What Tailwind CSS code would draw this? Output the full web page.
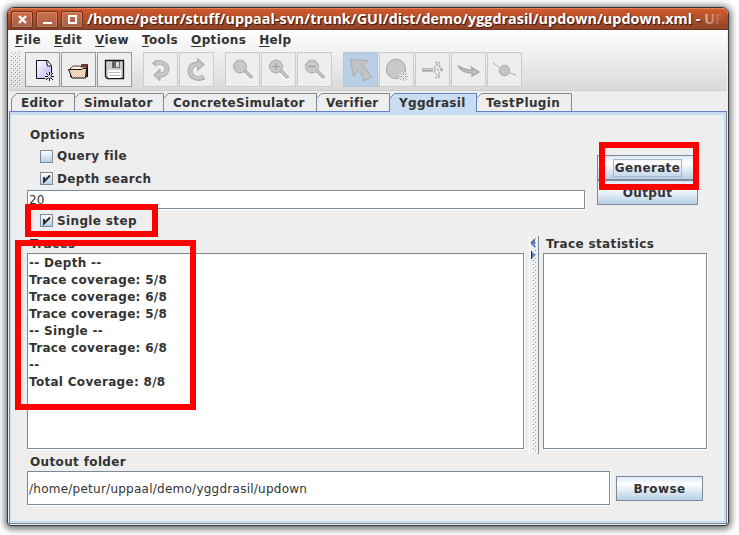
<!DOCTYPE html>
<html lang="en"><head><meta charset="utf-8"><title>UPPAAL</title>
<script src="https://cdn.jsdelivr.net/npm/@tailwindcss/browser@4"></script></head>
<body class="w-[739px] h-[535px] overflow-hidden bg-white pl-[7px] pt-[7px] font-['DejaVu_Sans',sans-serif] text-[12px] leading-[17px] font-bold text-[#333] tracking-[.36px]">
<svg width="0" height="0" class="absolute"><defs>
<pattern id="dots" width="4" height="4" patternUnits="userSpaceOnUse"><path d="M0 0h1v1H0zM2 2h1v1H2z" fill="#8796a8"/><path d="M1 1h1v1H1zM3 3h1v1H3z" fill="#fff"/></pattern>
<pattern id="check" width="2" height="2" patternUnits="userSpaceOnUse"><path d="M0 0h2v2H0z" fill="#fff0dc"/><path d="M0 0h1v1H0zM1 1h1v1H1z" fill="#e8bd98"/></pattern>
<linearGradient id="page" x2="1" y2="1"><stop stop-color="#fff"/><stop offset="1" stop-color="#b4b2f5"/></linearGradient>
<symbol id="lens" viewBox="0 0 33 33"><path d="M18 19l8 8" stroke="#fff" stroke-width="3"/><path d="M18 17l8 8" stroke="#aaa" stroke-width="3.5"/><path d="M18 17l7.500 7.500" stroke="#ccc" stroke-width="1.500"/><circle cx="14" cy="13.500" r="6.500" fill="#c8c8c8" stroke="#aaa"/></symbol>
<symbol id="burst" viewBox="0 0 9 9"><path d="M4.500 0v3M4.500 6v3M0 4.500h3M6 4.500h3M1 1l2.500 2.500M5.500 5.500L8 8M8 1L5.500 3.500M3.500 5.500L1 8" stroke="currentColor"/></symbol>
</defs></svg>
<div class="w-[722px] h-[519px] flex flex-col rounded-t-[7px] rounded-b-[4px] border border-[#393536] bg-[#eee] shadow-[0_1px_7px_2px_rgba(0,0,0,0.6)]">
  <header class="h-[22px] shrink-0 rounded-t-[6px] border-t border-t-[#e08055] border-b border-b-[#70351f] bg-gradient-to-b from-[#d1592c] to-[#8f4429] flex items-center pl-[3px] gap-[3px] tracking-normal">
    <div class="w-[22px] h-[17px] shrink-0 rounded-[2px] border border-[#6e301b] bg-white/15 shadow-[inset_0_0_0_1px_rgba(255,255,255,.2)] grid place-items-center"><svg width="9" height="9"><path d="M1 1l7 7M8 1L1 8" stroke="#fff" stroke-width="2.400"/></svg></div>
    <div class="w-[22px] h-[17px] shrink-0 rounded-[2px] border border-[#6e301b] bg-white/15 shadow-[inset_0_0_0_1px_rgba(255,255,255,.2)] grid place-items-center"><svg width="9" height="9"><path d="M0 8h9" stroke="#fff" stroke-width="2"/></svg></div>
    <div class="w-[22px] h-[17px] shrink-0 rounded-[2px] border border-[#6e301b] bg-white/15 shadow-[inset_0_0_0_1px_rgba(255,255,255,.2)] grid place-items-center"><svg width="9" height="9"><path d="M1 1h7v7H1z" fill="none" stroke="#fff" stroke-width="2"/></svg></div>
    <div class="whitespace-nowrap font-['Open_Sans',sans-serif] text-[14.38px] leading-[20px] text-white [text-shadow:1px_1px_1px_#30150d] -mt-px ml-[1px]">/home/petur/stuff/uppaal-svn/trunk/GUI/dist/demo/yggdrasil/updown/updown.xml - <span class="bg-gradient-to-r from-white/60 to-white/0 bg-clip-text text-transparent [text-shadow:none]">UP</span></div>
  </header>
  <div class="h-[60px] shrink-0 bg-gradient-to-b from-white to-[#dadada] mx-px">
    <nav class="h-[20px] flex pl-[6px] pt-[2px] gap-[13px]">
      <span><u class="underline-offset-2">F</u>ile</span><span><u class="underline-offset-2">E</u>dit</span><span><u class="underline-offset-2">V</u>iew</span><span><u class="underline-offset-2">T</u>ools</span><span><u class="underline-offset-2">O</u>ptions</span><span><u class="underline-offset-2">H</u>elp</span>
    </nav>
    <div class="flex pl-[2px] pt-[2px]">
      <svg width="10" height="36" class="mr-[4px]"><rect width="10" height="36" fill="url(#dots)"/></svg>
      <div class="flex gap-px mr-[11px] *:border *:border-[#999] *:bg-[#eee] *:size-[35px]">
        <svg viewBox="0 0 33 33"><path d="M10.500 7.500h11l4 5v13h-15z" fill="url(#page)" stroke="#111"/><path d="M20.500 8l1 5h4" fill="#fff" stroke="#111"/><path d="M19 20h10v9H19z" fill="#eee" opacity=".7"/><use href="#burst" x="19" y="19" width="9" height="9" color="#111"/></svg>
        <svg viewBox="0 0 33 33"><path d="M19 11h7v3h-7z" fill="#703535"/><path d="M25.500 13v11" stroke="#111"/><path d="M8.500 24V15l3-2h6l2 1h5v10z" fill="#fff0dc" stroke="#533"/><path d="M6.500 16.500h13l2-1h3l-1 9.500H10z" fill="url(#check)" stroke="#111"/></svg>
        <svg viewBox="0 0 33 33"><path d="M7.500 7.500h18v18h-16l-2-2z" fill="#ccc" stroke="#111" stroke-width="1.300"/><path d="M14 8h8v7h-8z" fill="#666"/><path d="M18 9h3v5h-3z" fill="#ddd"/><path d="M10 17h13v8H10z" fill="#fff"/><path d="M11 19.500h11M11 22.500h11" stroke="#bbb"/></svg>
      </div>
      <div class="flex gap-px mr-[11px] *:border *:border-[#ccc] *:bg-[#eee] *:size-[35px]">
        <svg viewBox="0 0 33 33"><path d="M10 12c3-4 13-3 13 4 0 5-4 6-8 6.500" fill="none" stroke="#aaa" stroke-width="5"/><path d="M9.500 22l6.500-6v12z" fill="#c0c0c0" stroke="#aaa"/><path d="M11 11.500c4-3 12-2 12 4.500 0 5-4 6-9 6.500" fill="none" stroke="#c6c6c6" stroke-width="3.500"/></svg>
        <svg viewBox="0 0 33 33"><path d="M24 24c-5 3-14 1-14-6 0-6 5-7 9-7" fill="none" stroke="#aaa" stroke-width="5"/><path d="M24.500 11.500l-7-6v12z" fill="#c0c0c0" stroke="#aaa"/><path d="M23 24c-4 2-13 1-13-6 0-6 5-7 10-6.500" fill="none" stroke="#c6c6c6" stroke-width="3.500"/></svg>
      </div>
      <div class="flex gap-px mr-[11px] *:border *:border-[#ccc] *:bg-[#eee] *:size-[35px]">
        <svg viewBox="0 0 33 33"><use href="#lens"/></svg>
        <svg viewBox="0 0 33 33"><use href="#lens"/><path d="M14 10v7M10.500 13.500h7" stroke="#999"/></svg>
        <svg viewBox="0 0 33 33"><use href="#lens"/><path d="M10.500 13.500h7" stroke="#999"/></svg>
      </div>
      <div class="flex gap-px *:border *:border-[#ccc] *:bg-[#eee] *:size-[35px]">
        <svg viewBox="0 0 33 33" class="!bg-[#b8cfe5] !border-[#b8c4d0]"><path d="M6.500 6.500l18 1-6 5c3 3 7 8 9 12l-8 3c-1-5-3-8-6-10l-4 6z" fill="#c2c2c2" stroke="#aaa"/></svg>
        <svg viewBox="0 0 33 33"><circle cx="16" cy="16" r="9.800" fill="#c8c8c8" stroke="#aaa"/><circle cx="23.500" cy="23.500" r="4.500" fill="#eee"/><use href="#burst" x="19" y="19" width="9" height="9" color="#aaa"/></svg>
        <svg viewBox="0 0 33 33"><path d="M6 17h11" stroke="#aaa" stroke-width="3.500"/><path d="M6 16.500h11" stroke="#c8c8c8"/><path d="M18 16.500h8M18 15l5-6M18 18l5 6M19 9.500h4v4M23 13l4 3.500-4 3.500M19 24.500h4v-4" fill="none" stroke="#aaa" stroke-width="1.300" stroke-dasharray="2 1"/></svg>
        <svg viewBox="0 0 33 33"><path d="M6.500 13.500c4 1 6 4 14 4l-1-3 7.500 4.500-7 4 .5-3C14 20 9 18 6.500 13.500z" fill="#c4c4c4" stroke="#aaa" stroke-width="1.500"/></svg>
        <svg viewBox="0 0 33 33"><path d="M5 9.500l6 5M22 20l6 2" stroke="#aaa"/><circle cx="16.500" cy="17.500" r="5.300" fill="#c4c4c4" stroke="#aaa"/></svg>
      </div>
    </div>
  </div>
  <div class="h-px shrink-0 bg-[#ccc] mx-px"></div>
  <div class="h-[20px] shrink-0 flex pt-[2px] pl-[3px] tracking-[.3px] *:grid *:h-[18px] *:shrink-0 *:*:[grid-area:1/1] *:*:[&:is(span)]:pl-[10px] *:*:[&:is(span)]:pt-[2px]">
    <div class="w-[63px]"><svg width="64" height="18" fill="none" stroke="#7a8a99" class="overflow-visible"><path d="M.5 18V5.500l5-5h58V18"/></svg><span>Editor</span></div>
    <div class="w-[89px]"><svg width="90" height="18" fill="none" stroke="#7a8a99" class="overflow-visible"><path d="M.5 5.500l5-5h84V18"/></svg><span>Simulator</span></div>
    <div class="w-[153px]"><svg width="154" height="18" fill="none" stroke="#7a8a99" class="overflow-visible"><path d="M.5 5.500l5-5h148V18"/></svg><span>ConcreteSimulator</span></div>
    <div class="w-[73px]"><svg width="74" height="18" fill="none" stroke="#7a8a99" class="overflow-visible"><path d="M.5 5.500l5-5h68V18"/></svg><span>Verifier</span></div>
    <div class="w-[87px] relative z-10"><svg width="88" height="20" fill="#c8ddf2" stroke="#6382bf" class="overflow-visible"><path d="M.5 19V5.500l5-5h82V19" /><path d="M1 18h86v3H1z" stroke="none"/></svg><span class="relative">Yggdrasil</span></div>
    <div class="w-[95px]"><svg width="96" height="18" fill="none" stroke="#7a8a99" class="overflow-visible"><path d="M.5 5.500l5-5h90V18"/></svg><span class="tracking-[.4px]">TestPlugin</span></div>
  </div>
  <main class="h-[413px] w-[718px] shrink-0 ml-px border border-[#6382bf] border-r-[#7a8a99] border-b-[#7a8a99] shadow-[inset_1px_3px_#c8ddf2,inset_-2px_-2px_#c8ddf2] pl-[17px]">
    <section class="flex h-[123px]">
      <div class="w-[558px] pt-[15px]">
        <div class="pl-[3px]">Options</div>
        <label class="flex items-center mt-[2px] h-[21px] pl-[13px] gap-[4px]"><i class="size-[13px] border border-[#7a8a99] bg-gradient-to-b from-white to-[#b8cfe5]"></i>Query file</label>
        <label class="flex items-center h-[23px] pl-[13px] gap-[4px]"><i class="size-[13px] border border-[#7a8a99] bg-gradient-to-b from-white to-[#b8cfe5]"><svg width="11" height="11"><path d="M3 4v4.500L9 2.500" fill="none" stroke="#222" stroke-width="1.800"/></svg></i><span class="pt-px">Depth search</span></label>
        <div class="h-[19px] border border-[#7a8a99] bg-white shadow-[1px_1px_#fff] pl-[1px] pt-px font-normal tracking-normal">20</div>
        <label class="flex items-center h-[23px] pl-[13px] gap-[4px]"><i class="size-[13px] border border-[#7a8a99] bg-gradient-to-b from-white to-[#b8cfe5]"><svg width="11" height="11"><path d="M3 4v4.500L9 2.500" fill="none" stroke="#222" stroke-width="1.800"/></svg></i><span class="pt-px">Single step</span></label>
      </div>
      <div class="ml-[12px] mt-[43px] w-[101px] text-center">
        <div class="h-[25px] border border-[#7a8a99] bg-gradient-to-b from-[#dde8f3] via-white via-30% to-[#b8cfe5] pt-[3px]"><span class="inline-block w-[69px] h-[18px] border border-[#a3b8cc] leading-[17px]">Generate</span></div>
        <div class="h-[25px] border border-[#7a8a99] bg-gradient-to-b from-[#dde8f3] via-white via-30% to-[#b8cfe5] pt-[4px]">Output</div>
      </div>
    </section>
    <section class="flex h-[219px]">
      <div class="w-[497px]">
        <div class="h-[18px] pl-[3px] pt-px">Traces</div>
        <div class="h-[196px] border border-[#7a8a99] bg-white shadow-[1px_1px_#fff] pl-[1px] pt-px tracking-[.3px]">
          <p>-- Depth --</p><p>Trace coverage: 5/8</p><p>Trace coverage: 6/8</p><p>Trace coverage: 5/8</p><p>-- Single --</p><p>Trace coverage: 6/8</p><p>--</p><p>Total Coverage: 8/8</p>
        </div>
      </div>
      <svg width="10" height="218" class="ml-[5px] mt-px"><path d="M.5 0v218" stroke="#fff"/><path d="M9.500 0v218" stroke="#7a8a99"/><rect x="3" y="2" width="5" height="214" fill="url(#dots)"/><path d="M1 2h5v22H1z" fill="#eee"/><path d="M6 3v9L1.500 7.500z" fill="#6382bf"/><path d="M5.500 3L2 7" fill="none" stroke="#333"/><path d="M2 14.500v9l4.500-4.500z" fill="#6382bf"/><path d="M2.500 15v8" stroke="#333"/></svg>
      <div class="w-[164px] ml-[4px]">
        <div class="h-[18px] pl-[3px] pt-px">Trace statistics</div>
        <div class="h-[196px] border border-[#7a8a99] bg-white shadow-[1px_1px_#fff]"></div>
      </div>
    </section>
    <div class="h-[17px] pl-[3px]">Outout folder</div>
    <div class="flex items-center gap-[6px]">
      <div class="w-[583px] h-[34px] border border-[#7a8a99] bg-white shadow-[1px_1px_#fff] pl-[1px] leading-[34px] font-normal tracking-[.25px]">/home/petur/uppaal/demo/yggdrasil/updown</div>
      <div class="w-[87px] h-[25px] border border-[#7a8a99] bg-gradient-to-b from-[#dde8f3] via-white via-30% to-[#b8cfe5] text-center pt-[4px]">Browse</div>
    </div>
  </main>
</div>
<div class="absolute z-20 left-[25px] top-[204px] w-[133px] h-[33px] border-[6px] border-[#f00]"></div>
<div class="absolute z-20 left-[15px] top-[240px] w-[181px] h-[170px] border-[6px] border-[#f00]"></div>
<div class="absolute z-20 left-[599px] top-[142px] w-[100px] h-[48px] border-[6px] border-[#f00]"></div>
</body></html>
